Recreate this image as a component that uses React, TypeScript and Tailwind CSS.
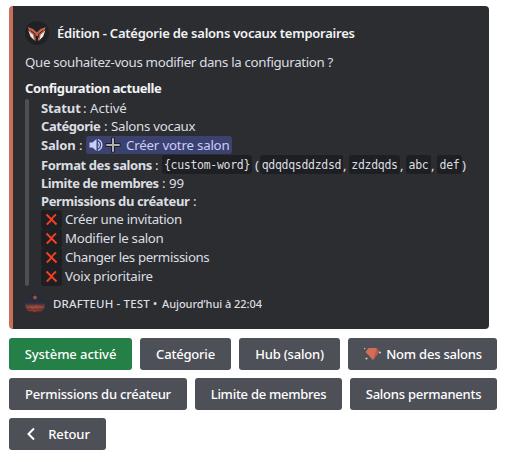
import React from "react";

type SegProps = { className: string; children: React.ReactNode };

function Seg({ className, children }: SegProps) {
  return <span className={`inline-block shrink-0 whitespace-nowrap ${className}`}>{children}</span>;
}

function Label({ className, children }: SegProps) {
  return (
    <>
      <b className={`inline-block shrink-0 whitespace-nowrap font-bold ${className}`}>{children}</b>
      <Seg className="w-[9px] pl-[2px]">:</Seg>
    </>
  );
}

function Code({ className, children }: SegProps) {
  return (
    <code
      className={`flex h-[19px] shrink-0 items-center justify-center whitespace-nowrap rounded-[3px] bg-[#1e1f22] pt-px font-['DejaVu_Sans_Mono',monospace] text-[11.5px] tracking-[-0.3px] ${className}`}
    >
      {children}
    </code>
  );
}

function Button({ className, children }: SegProps) {
  return (
    <button
      className={`flex h-8 shrink-0 items-center justify-center whitespace-nowrap rounded-[3px] text-[13px] font-medium text-white ${className}`}
    >
      {children}
    </button>
  );
}

function BotAvatar() {
  return (
    <svg className="h-6 w-6 shrink-0" viewBox="0 0 24 24">
      <circle cx="12" cy="12" r="12" fill="#202125" />
      <path d="M3.300 9.500 5.500 15.500 9.500 19.500V15L6.500 12zM20.300 9.500 18.100 15.500 14.100 19.500V15l3-3z" fill="#eeeae8" />
      <path
        d="M2.700 6 8 8l3.800 3.500L15.600 8l5.200-2-2.300 5.500-3 2-.7 5L13 20v-4.500l-1.200-1-1.200 1V20l-1.800-1.500-.7-5-3-2z"
        fill="#ca634c"
      />
      <path d="m5.500 9.500 4.500 3.500v3.500M18.100 9.500 13.600 13v3.500" fill="none" stroke="#2b2022" strokeWidth="1" />
    </svg>
  );
}

function ServerAvatar() {
  return (
    <svg className="h-5 w-5 shrink-0" viewBox="0 0 20 20">
      <defs>
        <clipPath id="server">
          <circle cx="10" cy="10" r="10" />
        </clipPath>
        <linearGradient id="dusk" x1="0" y1="0" x2="0" y2="1">
          <stop offset="0" stopColor="#1f2c39" />
          <stop offset=".45" stopColor="#2b2d3c" />
          <stop offset=".6" stopColor="#77403d" />
          <stop offset=".8" stopColor="#6b322d" />
          <stop offset="1" stopColor="#25242c" />
        </linearGradient>
      </defs>
      <g clipPath="url(#server)">
        <rect width="20" height="20" fill="url(#dusk)" />
        <circle cx="10" cy="3.500" r="1.900" fill="#a04c43" />
        <path d="M2 12.500h3l1-1 3 1 2-1.500 2 1h3l1 1h2v1h-5l-1 1-3-1-2 1-3-1H2z" fill="#9c4a3c" />
        <path d="M3 16h4l1-1 3 1h5v1h-4l-2 1-3-1H4z" fill="#8c3d31" />
      </g>
    </svg>
  );
}

function Cross() {
  return (
    <span className="flex h-[19px] w-[21px] items-center justify-center rounded-[3px] bg-[#1e1f22]">
      <svg className="h-[13px] w-[13px]" viewBox="0 0 13 13">
        <path
          d="M1.500 1.500c1.500 1.500 3 3 5 5l5 5M11 1.500c-2 1.500-3.500 3-4.500 5-1 1.500-3 3.500-4.700 5"
          fill="none"
          stroke="#f4401f"
          strokeWidth="2"
        />
      </svg>
    </span>
  );
}

function Speaker() {
  return (
    <svg className="h-[14px] w-[14px]" viewBox="0 0 14 14">
      <path d="M.5 4.500h3L7.500 1v12l-4-3.500h-3z" fill="#c9cdfb" />
      <path d="M9 4.300a3.500 3.500 0 0 1 0 5.400M9 1.700a5.600 5.600 0 0 1 0 10.600" fill="none" stroke="#c9cdfb" strokeWidth="1.400" />
    </svg>
  );
}

function Plus() {
  return (
    <svg className="h-4 w-4" viewBox="0 0 16 16">
      <path d="M8 .5v15M.5 8h15" stroke="#1c1d28" strokeWidth="4" />
      <path d="M8 1.300v13.400M1.300 8h13.400" stroke="#b0afad" strokeWidth="2" />
    </svg>
  );
}

function Gem() {
  return (
    <svg className="h-[18px] w-[20px]" viewBox="0 0 20 18">
      <path d="M5.500 3h8l2.500 4-6 8L2.500 7z" fill="#d06f58" />
      <path d="m13.500 3 2.500 4-6 8L12.500 7z" fill="#b95a47" />
      <g fill="#c3c5ca">
        <circle cx="1.700" cy="3.500" r=".7" />
        <circle cx="17" cy="7.500" r="1.100" />
        <circle cx="3.500" cy="13.500" r="1.100" />
      </g>
    </svg>
  );
}

function Permission({ className, children }: SegProps) {
  return (
    <div className="flex h-[19px] items-center">
      <Cross />
      <Seg className={`relative -top-px ml-[3px] ${className}`}>{children}</Seg>
    </div>
  );
}

export default function App() {
  return (
    <div className="h-[462px] w-[505px] overflow-hidden bg-white pl-[9px] pt-[6px] font-['Noto_Sans',sans-serif] text-[13.3px] leading-[18px]">
      <section className="flex h-[323px] w-[480px] flex-col rounded-[4px] border-l-4 border-[#cb6e57] bg-[#2b2d31] pl-3 text-[#dbdee1]">
        <header className="mt-[15px] flex h-6 items-center text-[13px] font-semibold text-[#f2f3f5]">
          <BotAvatar />
          <Seg className="ml-2 tracking-[-0.24px]">Édition - Catégorie de salons vocaux temporaires</Seg>
        </header>
        <p className="mt-2 flex h-[18px] items-center">
          <Seg className="tracking-[-0.33px]">Que souhaitez-vous modifier dans la configuration ?</Seg>
        </p>
        <h2 className="mt-2 flex h-[18px] items-center text-[13px] font-bold text-[#f2f3f5]">
          <Seg className="tracking-[-0.4px]">Configuration actuelle</Seg>
        </h2>
        <div className="mt-[2px] flex h-[187px]">
          <div className="w-1 shrink-0 rounded-[2px] bg-[#4e5058]" />
          <div className="ml-3 flex flex-col">
            <div className="flex h-[18px] items-center">
              <Label className="w-10 text-[13px] tracking-[-0.1px]">Statut</Label>
              <Seg className="tracking-[-0.1px]">Activé</Seg>
            </div>
            <div className="flex h-[18px] items-center">
              <Label className="w-[61px] text-[13px] tracking-[-0.45px]">Catégorie</Label>
              <Seg className="tracking-[-0.3px]">Salons vocaux</Seg>
            </div>
            <div className="flex h-5 items-center">
              <Label className="w-9 text-[13px] tracking-[-0.2px]">Salon</Label>
              <span className="flex h-[18px] w-[146px] items-center rounded-[3px] bg-[#3c4270] pl-[3px] text-[#c9cdfb]">
                <Speaker />
                <span className="ml-[2px]"><Plus /></span>
                <Seg className="ml-[5px] tracking-[-0.2px]">Créer votre salon</Seg>
              </span>
            </div>
            <div className="flex h-[19px] items-center">
              <Label className="w-[112px] text-[13px] tracking-[-0.4px]">Format des salons</Label>
              <Code className="w-[90px]">{"{custom-word}"}</Code>
              <Seg className="w-2 pl-[3px]">(</Seg>
              <Code className="w-[83px]">qdqdqsddzdsd</Code>
              <Seg className="w-[6px]">,</Seg>
              <Code className="w-[51px]">zdzdqds</Code>
              <Seg className="w-[6px]">,</Seg>
              <Code className="w-[25px]">abc</Code>
              <Seg className="w-[6px]">,</Seg>
              <Code className="w-[25px]">def</Code>
              <Seg className="">)</Seg>
            </div>
            <div className="flex h-[18px] items-center">
              <Label className="w-[119px] text-[13px] tracking-[-0.43px]">Limite de membres</Label>
              <Seg className="">99</Seg>
            </div>
            <div className="flex h-[18px] items-center">
              <Label className="w-[150px] text-[13px] tracking-[-0.38px]">Permissions du créateur</Label>
            </div>
            <Permission className="tracking-[-0.33px]">Créer une invitation</Permission>
            <Permission className="tracking-[-0.33px]">Modifier le salon</Permission>
            <Permission className="tracking-[-0.4px]">Changer les permissions</Permission>
            <Permission className="tracking-[-0.27px]">Voix prioritaire</Permission>
          </div>
        </div>
        <footer className="mt-2 flex h-5 items-center text-[11px] font-medium">
          <ServerAvatar />
          <Seg className="ml-2 w-[97px] text-[11.5px] tracking-[0.15px]">DRAFTEUH - TEST</Seg>
          <Seg className="ml-[3px] w-[9px]">•</Seg>
          <Seg className="tracking-[-0.05px]">Aujourd’hui à 22:04</Seg>
        </footer>
      </section>
      <div className="mt-[9px] flex flex-col gap-2">
        <div className="flex gap-2">
          <Button className="w-[123px] bg-[#248046] tracking-[-0.07px]">Système activé</Button>
          <Button className="w-[91px] bg-[#4e5058] tracking-[-0.2px]">Catégorie</Button>
          <Button className="w-[101px] bg-[#4e5058] tracking-[-0.2px]">Hub (salon)</Button>
          <Button className="w-[149px] gap-[3px] bg-[#4e5058] tracking-[-0.22px]"><Gem />Nom des salons</Button>
        </div>
        <div className="flex gap-2">
          <Button className="w-[178px] bg-[#4e5058] tracking-[-0.22px]">Permissions du créateur</Button>
          <Button className="w-[147px] bg-[#4e5058] tracking-[-0.27px]">Limite de membres</Button>
          <Button className="w-[147px] bg-[#4e5058] tracking-[-0.25px]">Salons permanents</Button>
        </div>
        <Button className="w-[97px] bg-[#4e5058] tracking-[-0.1px]">
          <svg className="mr-[9px] h-[14px] w-[14px]" viewBox="0 0 14 14">
            <path d="M9 1.500 3.500 7 9 12.500" fill="none" stroke="#fff" strokeWidth="2" />
          </svg>
          Retour
        </Button>
      </div>
    </div>
  );
}
